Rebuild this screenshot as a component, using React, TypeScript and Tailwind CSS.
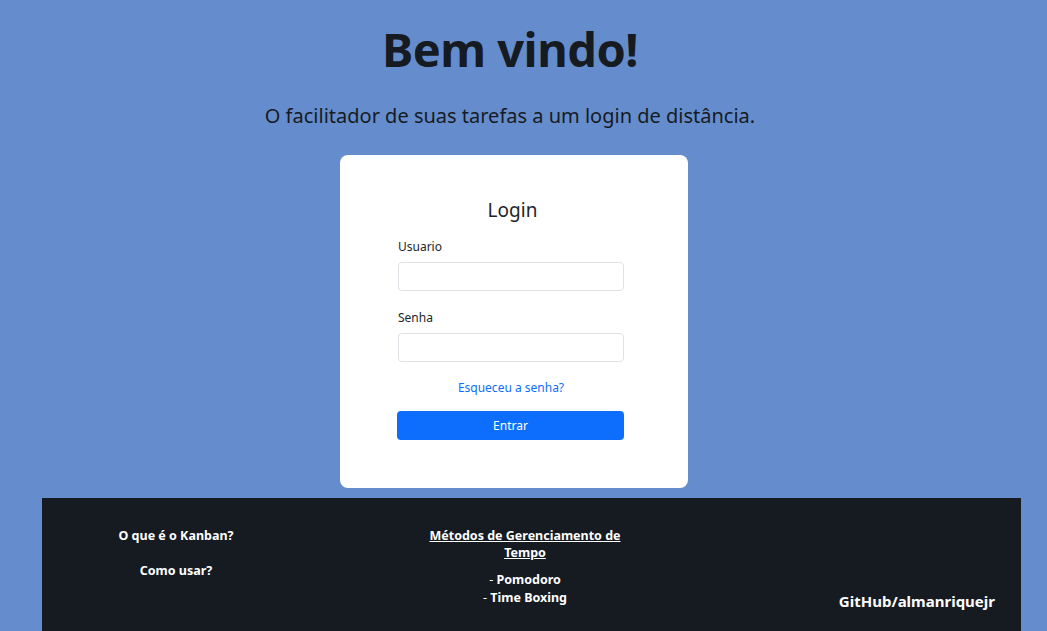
import React from 'react';

const App = () => {
  return (
    <div className="min-h-[631px] bg-[#658dcd] font-['Noto_Sans',sans-serif] text-[#161b22] flex flex-col items-start overflow-hidden">
      {/* Header */}
      <h1 className="w-[1020px] text-center mt-[19px] text-[47px] leading-[60px] font-bold tracking-[-0.5px]">Bem vindo!</h1>
      <p className="w-[1020px] text-center mt-[23px] text-[20px] leading-[28px]">O facilitador de suas tarefas a um login de distância.</p>

      {/* Login card */}
      <div className="ml-[340px] mt-[25px] w-[348px] h-[333px] bg-white rounded-[8px] flex flex-col items-center pt-[43px]">
        <h2 className="-ml-[3px] text-[19px] leading-[24px] text-[#212529]">Login</h2>
        <form className="-ml-[6px] w-[226px] mt-[17px] flex flex-col text-[12px] text-[#212529]">
          <label className="leading-[16px]">Usuario</label>
          <input className="mt-[7px] h-[29px] border border-[#dee2e6] rounded-[4px] px-2 outline-none" />
          <label className="mt-[19px] leading-[16px]">Senha</label>
          <input type="password" className="mt-[7px] h-[29px] border border-[#dee2e6] rounded-[4px] px-2 outline-none" />
          <a href="#" className="mt-[18px] text-center leading-[16px] text-[#0d6efd]">Esqueceu a senha?</a>
          <button type="button" className="mt-[15px] -ml-px h-[29px] rounded-[4px] bg-[#0d6efd] text-white">Entrar</button>
        </form>
      </div>

      {/* Footer */}
      <footer className="ml-[42px] mt-[10px] w-[979px] h-[140px] bg-[#161b22] text-white font-bold text-[12.5px] flex">
        <div className="w-[268px] flex flex-col items-center pt-[30px]">
          <a href="#" className="leading-[16px]">O que é o Kanban?</a>
          <a href="#" className="mt-[19px] leading-[16px]">Como usar?</a>
        </div>
        <div className="ml-[115px] w-[200px] flex flex-col items-center pt-[29px] text-center">
          <a href="#" className="underline leading-[17px]">Métodos de Gerenciamento de Tempo</a>
          <div className="mt-[10px] leading-[18px]">
            <div><span className="font-normal">-</span> Pomodoro</div>
            <div><span className="font-normal">-</span> Time Boxing</div>
          </div>
        </div>
        <div className="flex-1 flex items-end justify-end pr-[26px] pb-[27px]">
          <a href="#" className="text-[15px] leading-[20px]">GitHub/almanriquejr</a>
        </div>
      </footer>
    </div>
  );
};

export default App;
